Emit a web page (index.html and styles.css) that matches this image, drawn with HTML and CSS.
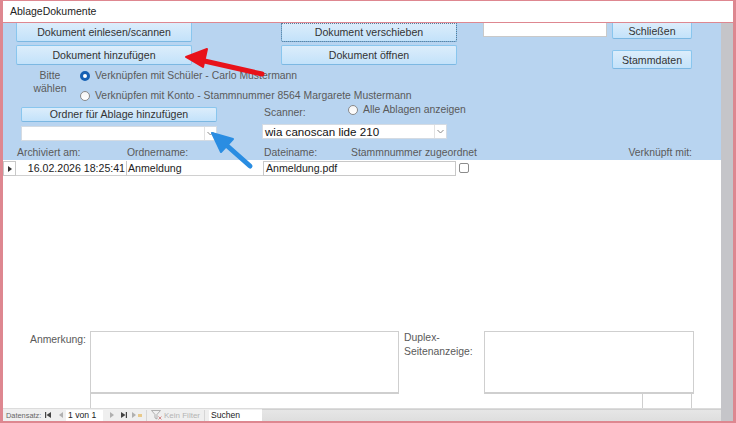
FILE: index.html
```html
<!DOCTYPE html>
<html lang="de">
<head>
    <meta charset="UTF-8">
    <title>AblageDokumente</title>
    <link rel="stylesheet" href="styles.css">
</head>
<body>
    <div class="window">
        <div class="titlebar">AblageDokumente</div>
        <div class="frame">
            <div class="form">
                <!-- Formularkopf -->
                <div class="header">
                    <div class="row-top">
                        <div class="btn-col">
                            <button class="btn cut">Dokument einlesen/scannen</button>
                            <button class="btn">Dokument hinzufügen</button>
                        </div>
                        <div class="btn-col mid">
                            <button class="btn cut focus">Dokument verschieben</button>
                            <button class="btn">Dokument öffnen</button>
                        </div>
                        <div class="search-box"></div>
                        <div class="btn-col right">
                            <button class="btn small cut">Schließen</button>
                            <button class="btn small">Stammdaten</button>
                        </div>
                    </div>

                    <div class="row-link">
                        <div class="choose">Bitte<br>wählen</div>
                        <div class="radios">
                            <div class="radio"><span class="dot on"></span>Verknüpfen mit Schüler - Carlo Mustermann</div>
                            <div class="radio"><span class="dot"></span>Verknüpfen mit Konto - Stammnummer 8564 Margarete Mustermann</div>
                        </div>
                    </div>

                    <div class="row-folder">
                        <div class="folder">
                            <button class="btn thin">Ordner für Ablage hinzufügen</button>
                            <div class="combo"><span class="combo-text"></span><span class="combo-arrow"><svg width="7" height="5" viewBox="0 0 7 5"><path d="M0.5 1 L3.5 4 L6.5 1" fill="none" stroke="#8a8a8a" stroke-width="1"/></svg></span></div>
                        </div>
                        <div class="scanner">
                            <div class="scanner-top">
                                <span class="scanner-label">Scanner:</span>
                                <div class="radio"><span class="dot"></span>Alle Ablagen anzeigen</div>
                            </div>
                            <div class="combo wide"><span class="combo-text">wia canoscan lide 210</span><span class="combo-arrow"><svg width="7" height="5" viewBox="0 0 7 5"><path d="M0.5 1 L3.5 4 L6.5 1" fill="none" stroke="#8a8a8a" stroke-width="1"/></svg></span></div>
                        </div>
                    </div>

                    <div class="row-heads">
                        <span>Archiviert am:</span>
                        <span>Ordnername:</span>
                        <span>Dateiname:</span>
                        <span>Stammnummer zugeordnet</span>
                        <span class="link-head">Verknüpft mit:</span>
                    </div>
                </div>

                <!-- Detailbereich -->
                <div class="detail">
                    <div class="record">
                        <span class="selector"><svg width="4" height="6" viewBox="0 0 4 6"><path d="M0 0 L4 3 L0 6 Z" fill="#333"/></svg></span>
                        <span class="cell date">16.02.2026 18:25:41</span>
                        <span class="cell folder-name">Anmeldung</span>
                        <span class="cell file-name">Anmeldung.pdf</span>
                        <span class="check"></span>
                    </div>

                    <div class="notes">
                        <div class="notes-row">
                            <span class="note-label">Anmerkung:</span>
                            <div class="note-box"></div>
                            <span class="duplex-label">Duplex-<br>Seitenanzeige:</span>
                            <div class="duplex-box"></div>
                        </div>
                        <div class="notes-bottom">
                            <div class="field-long"></div>
                            <div class="field-short"></div>
                        </div>
                    </div>
                </div>

                <!-- Navigationsleiste -->
                <div class="navbar">
                    <span class="nav-label">Datensatz:</span>
                    <span class="nav-icon first"><svg width="6" height="6" viewBox="0 0 6 6"><rect x="0" y="0" width="1.2" height="6" fill="#444"/><path d="M6 0 L1.5 3 L6 6 Z" fill="#444"/></svg></span>
                    <span class="nav-icon prev"><svg width="4" height="6" viewBox="0 0 4 6"><path d="M4 0 L0 3 L4 6 Z" fill="#b0b0b0"/></svg></span>
                    <span class="nav-pos">1 von 1</span>
                    <span class="nav-icon next"><svg width="4" height="6" viewBox="0 0 4 6"><path d="M0 0 L4 3 L0 6 Z" fill="#b0b0b0"/></svg></span>
                    <span class="nav-icon last"><svg width="6" height="6" viewBox="0 0 6 6"><path d="M0 0 L4.5 3 L0 6 Z" fill="#444"/><rect x="4.8" y="0" width="1.2" height="6" fill="#444"/></svg></span>
                    <span class="nav-icon new"><svg width="10" height="6" viewBox="0 0 10 6"><path d="M0 0 L4 3 L0 6 Z" fill="#b0b0b0"/><rect x="6" y="2" width="4" height="3" fill="#e8c98a"/></svg></span>
                    <span class="nav-sep"></span>
                    <span class="nav-filter"><svg width="11" height="10" viewBox="0 0 11 10"><path d="M0.5 0.5 H9.5 L6 4.5 V9 L4 8 V4.5 Z" fill="none" stroke="#a8a8a8" stroke-width="0.9"/><path d="M7.5 6.5 L10.5 9.5 M10.5 6.5 L7.5 9.5" stroke="#d08080" stroke-width="0.9"/></svg>Kein Filter</span>
                    <span class="nav-sep"></span>
                    <span class="nav-search">Suchen</span>
                    <span class="hscroll"></span>
                </div>
            </div>
            <div class="scrollbar"></div>
        </div>

        <!-- Markierungspfeile -->
        <svg class="marks" width="736" height="423" viewBox="0 0 736 423">
            <line x1="262" y1="74" x2="200" y2="60" stroke="#e8121a" stroke-width="5" stroke-linecap="round"/>
            <path d="M186 57 L207 49 L203 67 Z" fill="#e8121a" stroke="#e8121a" stroke-width="2" stroke-linejoin="round"/>
            <line x1="250" y1="166" x2="224" y2="143" stroke="#2a8de2" stroke-width="5" stroke-linecap="round"/>
            <path d="M212 133 L233 139 L221 152 Z" fill="#2a8de2" stroke="#2a8de2" stroke-width="2" stroke-linejoin="round"/>
        </svg>
    </div>
</body>
</html>
```

FILE: styles.css
```css
* {
    box-sizing: border-box;
}

body {
    margin: 0;
    font-family: 'Liberation Sans', Arial, sans-serif;
    font-size: 10.4px;
    color: #5a5a5a;
    background-color: #fff;
}

.window {
    position: relative;
    width: 736px;
    height: 423px;
    border: 1px solid #de8790;
    border-left-width: 3px;
    border-right-width: 3px;
    border-bottom-width: 2px;
    display: flex;
    flex-direction: column;
}

.titlebar {
    height: 22px;
    border-bottom: 1px solid #de8790;
    padding-left: 7px;
    line-height: 21px;
    font-size: 10.5px;
    color: #222;
}

.frame {
    height: 398px;
    display: flex;
}

.form {
    width: 718px;
    display: flex;
    flex-direction: column;
}

.scrollbar {
    width: 12px;
    background-color: #c5c5c9;
}

/* --- Kopfbereich --- */
.header {
    height: 137px;
    background-color: #b8d4f0;
    display: flex;
    flex-direction: column;
}

.btn {
    display: block;
    font: inherit;
    font-size: 10.6px;
    color: #333;
    background: linear-gradient(#dcedfb, #c3e2fa);
    border: 1px solid #89c6ee;
    border-bottom-color: #7cb8e2;
    border-radius: 2px;
    padding: 0;
    text-align: center;
    width: 176px;
    height: 20px;
}

.btn.cut {
    height: 19px;
    border-top: none;
    border-radius: 0 0 2px 2px;
}

.btn.focus {
    outline: 1px dotted #5b7a98;
    outline-offset: -1px;
}

.btn.small {
    width: 80px;
}

.btn.thin {
    width: 196px;
    height: 15px;
    line-height: 13px;
}

.row-top {
    height: 46px;
    display: flex;
    padding-left: 13px;
}

.btn-col {
    display: flex;
    flex-direction: column;
    gap: 3px;
}

.btn-col.mid {
    margin-left: 89px;
}

.btn-col.right {
    margin-left: 5px;
    gap: 11px;
}

.btn-col.right .btn.cut {
    height: 16px;
    line-height: 14px;
}

.btn-col.right .btn:last-child {
    height: 19px;
}

.search-box {
    margin-left: 26px;
    width: 124px;
    height: 14px;
    background-color: #fff;
    border: 1px solid #c9c9c9;
    border-top: none;
}

.row-link {
    height: 33px;
    display: flex;
    padding-left: 27px;
}

.choose {
    width: 40px;
    text-align: center;
    line-height: 13px;
}

.radios {
    margin-left: 10px;
    display: flex;
    flex-direction: column;
    gap: 7px;
}

.radio {
    display: flex;
    align-items: center;
    line-height: 13px;
    height: 13px;
    white-space: nowrap;
}

.dot {
    width: 10px;
    height: 10px;
    border-radius: 50%;
    border: 1px solid #8a8a8a;
    background: linear-gradient(#f4f4f4, #fff);
    margin-right: 5px;
    flex-shrink: 0;
}

.dot.on {
    border: 3px solid #1560b4;
    background: #fff;
}

.row-folder {
    height: 39px;
    display: flex;
    padding-left: 18px;
}

.folder {
    padding-top: 5px;
    display: flex;
    flex-direction: column;
    gap: 4px;
}

.combo {
    width: 196px;
    height: 16px;
    background-color: #fff;
    border: 1px solid #d4dbe3;
    display: flex;
    align-items: center;
}

.combo.wide {
    width: 185px;
    height: 15px;
}

.combo-text {
    flex: 1;
    padding-left: 2px;
    color: #111;
    font-size: 11.6px;
    line-height: 13px;
}

.combo-arrow {
    width: 12px;
    height: 100%;
    border-left: 1px solid #e2e2e2;
    display: flex;
    align-items: center;
    justify-content: center;
}

.scanner {
    margin-left: 45px;
    display: flex;
    flex-direction: column;
}

.scanner-top {
    height: 22px;
    display: flex;
}

.scanner-label {
    width: 86px;
    padding-left: 2px;
    padding-top: 4px;
    line-height: 13px;
}

.scanner-top .radio {
    margin-top: 1px;
}

.row-heads {
    flex: 1;
    display: grid;
    grid-template-columns: 110px 137px 87px 1fr auto;
    align-items: end;
    padding: 0 29px 0 14px;
    line-height: 13px;
    padding-bottom: 1px;
}

/* --- Detailbereich --- */
.detail {
    height: 248px;
    background-color: #fff;
    display: flex;
    flex-direction: column;
}

.record {
    margin-top: 1px;
    height: 15px;
    display: flex;
    color: #222;
    font-size: 10.6px;
}

.selector {
    width: 13px;
    border: 1px solid #c8c8c8;
    display: flex;
    align-items: center;
    justify-content: center;
}

.cell {
    border-bottom: 1px solid #d0d0d0;
    line-height: 14px;
    white-space: nowrap;
}

.cell.date {
    width: 110px;
    text-align: right;
    padding-right: 1px;
}

.cell.folder-name {
    width: 137px;
    border-left: 1px solid #c8c8c8;
    padding-left: 1px;
}

.cell.file-name {
    width: 193px;
    border: 1px solid #c8c8c8;
    padding-left: 2px;
    line-height: 13px;
}

.check {
    width: 10px;
    height: 10px;
    margin: 2px 0 0 3px;
    border: 1px solid #8c8c8c;
    border-radius: 2px;
    background-color: #fff;
}

.notes {
    margin-top: auto;
    padding-left: 87px;
}

.notes-row {
    height: 63px;
    display: flex;
    position: relative;
}

.note-label {
    position: absolute;
    right: calc(100% + 4px);
    top: 2px;
    white-space: nowrap;
    line-height: 13px;
}

.note-box {
    width: 309px;
    border: 1px solid #cfcfcf;
    border-bottom: 2px solid #cfcfcf;
}

.duplex-label {
    width: 85px;
    padding-left: 5px;
    line-height: 14px;
}

.duplex-box {
    width: 210px;
    border: 1px solid #cfcfcf;
    border-bottom: 2px solid #cfcfcf;
}

.notes-bottom {
    height: 14px;
    display: flex;
}

.field-long {
    width: 553px;
    border-left: 1px solid #cfcfcf;
    border-right: 1px solid #cfcfcf;
}

.field-short {
    width: 49px;
    border-right: 1px solid #cfcfcf;
}

/* --- Navigation --- */
.navbar {
    height: 13px;
    background-color: #efefef;
    border-top: 1px solid #dcdcdc;
    display: flex;
    align-items: center;
    font-size: 8px;
    color: #666;
    padding-left: 3px;
    white-space: nowrap;
}

.navbar > span {
    flex-shrink: 0;
}

.nav-label {
    width: 39px;
    font-size: 7.4px;
}

.nav-icon {
    display: flex;
    align-items: center;
}

.nav-icon.first {
    margin-right: 8px;
}

.nav-icon.prev {
    margin-right: 3px;
}

.nav-icon.next {
    margin-left: 7px;
    margin-right: 7px;
}

.nav-icon.last {
    margin-right: 5px;
}

.nav-pos {
    background-color: #fff;
    width: 37px;
    height: 11px;
    line-height: 11px;
    color: #222;
    font-size: 8.6px;
    padding-left: 2px;
}

.nav-sep {
    width: 1px;
    height: 11px;
    background-color: #d6d6d6;
    margin: 0 4px;
}

.nav-filter {
    display: flex;
    align-items: center;
    gap: 2px;
    color: #b4b4b4;
    width: 49px;
}

.nav-search {
    background-color: #fff;
    width: 53px;
    height: 11px;
    line-height: 11px;
    color: #222;
    font-size: 8.6px;
    padding-left: 2px;
}

.navbar > .hscroll {
    flex: 1;
    height: 12px;
    background: linear-gradient(#e6e6e6, #dedede);
    border-top: 1px solid #d0d0d0;
}

/* --- Pfeile --- */
.marks {
    position: absolute;
    left: -3px;
    top: -1px;
    pointer-events: none;
}
```
